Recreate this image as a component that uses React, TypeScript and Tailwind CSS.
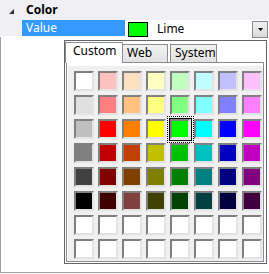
import React from 'react'

const SWATCHES: string[][] = [
    ['bg-[#ffffff]', 'bg-[#ffc0c0]', 'bg-[#ffe0c0]', 'bg-[#ffffc0]', 'bg-[#c0ffc0]', 'bg-[#c0ffff]', 'bg-[#c0c0ff]', 'bg-[#ffc0ff]'],
    ['bg-[#e0e0e0]', 'bg-[#ff8080]', 'bg-[#ffc080]', 'bg-[#ffff80]', 'bg-[#80ff80]', 'bg-[#80ffff]', 'bg-[#8080ff]', 'bg-[#ff80ff]'],
    ['bg-[#c0c0c0]', 'bg-[#ff0000]', 'bg-[#ff8000]', 'bg-[#ffff00]', 'bg-[#00ff00]', 'bg-[#00ffff]', 'bg-[#0000ff]', 'bg-[#ff00ff]'],
    ['bg-[#808080]', 'bg-[#c00000]', 'bg-[#c04000]', 'bg-[#c0c000]', 'bg-[#00c000]', 'bg-[#00c0c0]', 'bg-[#0000c0]', 'bg-[#c000c0]'],
    ['bg-[#404040]', 'bg-[#800000]', 'bg-[#804000]', 'bg-[#808000]', 'bg-[#008000]', 'bg-[#008080]', 'bg-[#000080]', 'bg-[#800080]'],
    ['bg-[#000000]', 'bg-[#400000]', 'bg-[#804040]', 'bg-[#404000]', 'bg-[#004000]', 'bg-[#004040]', 'bg-[#000040]', 'bg-[#400040]'],
    Array(8).fill('bg-[#ffffff]'),
    Array(8).fill('bg-[#ffffff]'),
]

function Swatch({ color, selected }: { color: string; selected?: boolean }) {
    return (
        <div className="relative w-[20px] h-[20px]">
            <div className={`w-full h-full border-2 border-t-[#808080] border-l-[#808080] border-r-[#e3e3e3] border-b-[#e3e3e3] ${color}`} />
            {selected && (
                <>
                    <div className="absolute -left-[1px] -top-[1px] -right-[2px] -bottom-[2px] border border-black" />
                    <div className="absolute -left-[3px] -top-[3px] -right-[4px] -bottom-[4px] border border-dotted border-black" />
                </>
            )}
        </div>
    )
}

function ColorPopup() {
    return (
        <div className="absolute left-[64px] top-[40px] w-[203px] h-[224px] border border-[#646464] bg-white flex flex-col">
            {/* tabs */}
            <div className="h-[21px] pt-[1px] flex items-end">
                <div className="relative z-10 -mb-[1px] w-[58px] h-[21px] border border-b-0 border-[#898c95] bg-white pl-[7px] leading-[16px]">
                    Custom
                </div>
                <div className="-ml-[1px] w-[46px] h-[18px] border border-b-0 border-[#898c95] bg-linear-to-b from-[#f3f3f3] to-[#e1e1e1] pl-[4px] leading-[16px]">
                    Web
                </div>
                <div className="ml-[2px] w-[47px] h-[18px] border border-b-0 border-[#898c95] bg-linear-to-b from-[#f3f3f3] to-[#e1e1e1] pl-[4px] leading-[16px]">
                    System
                </div>
            </div>
            {/* tab page */}
            <div className="ml-[1px] w-[198px] h-[200px] border border-[#898c95] bg-white pl-[1px] pt-[3px] overflow-hidden flex">
                <div className="flex-1 bg-[#f0f0f0] pl-[6px] pt-[5px]">
                    <div className="grid grid-cols-[repeat(8,20px)] gap-[4px]">
                        {SWATCHES.map((row, r) =>
                            row.map((c, i) => (
                                <Swatch key={`${r}-${i}`} color={c} selected={r === 2 && i === 4} />
                            ))
                        )}
                    </div>
                </div>
            </div>
        </div>
    )
}

export default function App() {
    return (
        <div className="relative w-[269px] h-[274px] bg-white overflow-hidden text-[12px] text-black font-['Noto_Sans',sans-serif]">
            {/* category row */}
            <div className="h-[20px] bg-[#f0f0f4] flex items-center leading-[20px]">
                <svg width="5" height="5" viewBox="0 0 5 5" className="ml-[9px] mt-[3px]">
                    <polygon points="5,0 5,5 0,5" fill="#333" />
                </svg>
                <span className="ml-[12px] font-bold">Color</span>
            </div>
            {/* property row */}
            <div className="h-[17px] flex items-start">
                <div className="w-[22px] h-[16px] bg-[#f0f0f4]" />
                <div className="w-[103px] h-[16px] bg-[#3399ff] text-white pl-[4px] leading-[16px]">Value</div>
                <div className="flex-1 flex items-start h-[17px]">
                    <div className="ml-[3px] mt-[2px] w-[20px] h-[15px] border border-black bg-[#00ff00]" />
                    <span className="ml-[9px] leading-[16px] mt-[1px]">Lime</span>
                    <div className="ml-auto mr-[1px] mt-[1px] w-[16px] h-[17px] border border-[#8a8a8a] bg-linear-to-b from-[#f2f2f2] to-[#d9d9d9] flex items-center justify-center">
                        <svg width="5" height="3" viewBox="0 0 5 3">
                            <polygon points="0,0 5,0 2.5,3" fill="#000" />
                        </svg>
                    </div>
                </div>
            </div>
            {/* lower area */}
            <div className="h-[236px] border-l border-b border-[#a0a0a0]" />
            <ColorPopup />
        </div>
    )
}
